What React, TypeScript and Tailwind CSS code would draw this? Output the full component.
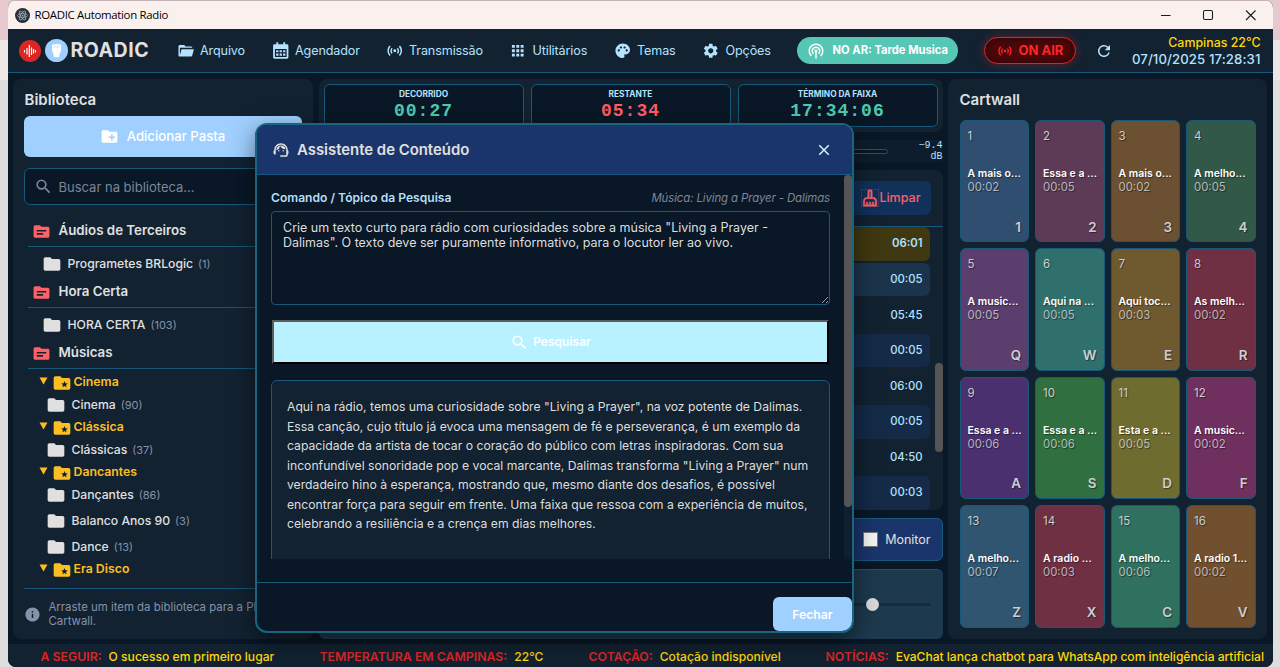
import type { ReactNode } from "react";
import type { IconType } from "react-icons";
import {
  MdApps,
  MdClose,
  MdCreateNewFolder,
  MdFolder,
  MdInfo,
  MdOutlineCleaningServices,
  MdPalette,
  MdPodcasts,
  MdRefresh,
  MdSearch,
  MdSensors,
  MdSettings,
  MdSource,
  MdSupportAgent,
} from "react-icons/md";

const FolderOpen = ({ className }: { className?: string }) => (
  <svg viewBox="0 0 24 24" fill="currentColor" className={className}>
    <path d="M19,20H4C2.89,20 2,19.1 2,18V6C2,4.89 2.89,4 4,4H10L12,6H19A2,2 0 0,1 21,8H4V18L6.14,10H23.21L20.93,18.5C20.7,19.37 19.92,20 19,20Z" />
  </svg>
);

const Calendar = ({ className }: { className?: string }) => (
  <svg viewBox="0 0 24 24" fill="currentColor" className={className}>
    <path
      fillRule="evenodd"
      d="M6 0.5H8.5V3H15.5V0.5H18V3H20.5A2 2 0 0 1 22.5 5V21A2 2 0 0 1 20.5 23H3.5A2 2 0 0 1 1.5 21V5A2 2 0 0 1 3.5 3H6ZM4 9.5V20.5H20V9.5Z"
    />
    <path d="M5.7 11.2H8.8V14.2H5.7ZM10.4 11.2H13.6V14.2H10.4ZM15.2 11.2H18.3V14.2H15.2ZM5.7 15.8H8.8V18.8H5.7ZM10.4 15.8H13.6V18.8H10.4ZM15.2 15.8H18.3V18.8H15.2Z" />
  </svg>
);

const FolderStar = ({ className }: { className?: string }) => (
  <svg viewBox="0 0 24 24" fill="currentColor" className={className}>
    <path d="M20,6H12L10,4H4A2,2 0 0,0 2,6V18A2,2 0 0,0 4,20H20A2,2 0 0,0 22,18V8A2,2 0 0,0 20,6Z" />
    <path d="M15 9.5L16.1 12.3L19 12.5L16.8 14.4L17.5 17.2L15 15.7L12.5 17.2L13.2 14.4L11 12.5L13.9 12.3Z" fill="#122231" />
  </svg>
);

const menu: { label: string; icon: IconType | typeof FolderOpen; width: string }[] = [
  { label: "Arquivo", icon: FolderOpen, width: "w-[95px]" },
  { label: "Agendador", icon: Calendar, width: "w-[114px]" },
  { label: "Transmissão", icon: MdSensors, width: "w-[123.5px]" },
  { label: "Utilitários", icon: MdApps, width: "w-[104.5px]" },
  { label: "Temas", icon: MdPalette, width: "w-[88.5px]" },
  { label: "Opções", icon: MdSettings, width: "w-[94.5px]" },
];

const timers = [
  { label: "DECORRIDO", value: "00:27", color: "text-[#4ec9b0]" },
  { label: "RESTANTE", value: "05:34", color: "text-[#ff5c62]" },
  { label: "TÉRMINO DA FAIXA", value: "17:34:06", color: "text-[#4ec9b0]" },
];

const playlist = [
  { time: "06:01", style: "bg-[#403810] font-semibold" },
  { time: "00:05", style: "bg-[#1b344c]" },
  { time: "05:45", style: "" },
  { time: "00:05", style: "bg-[#142a47]" },
  { time: "06:00", style: "" },
  { time: "00:05", style: "bg-[#142a47]" },
  { time: "04:50", style: "" },
  { time: "00:03", style: "bg-[#142a47]" },
];

const genres = [
  { name: "Cinema", folders: [{ name: "Cinema", count: 90 }] },
  { name: "Clássica", folders: [{ name: "Clássicas", count: 37 }] },
  {
    name: "Dancantes",
    folders: [
      { name: "Dançantes", count: 86 },
      { name: "Balanco Anos 90", count: 3 },
      { name: "Dance", count: 13 },
    ],
  },
  { name: "Era Disco", folders: [] },
];

const carts = [
  { title: "A mais o...", time: "00:02", hotkey: "1", bg: "bg-[#304e70]" },
  { title: "Essa e a ...", time: "00:05", hotkey: "2", bg: "bg-[#5d3b57]" },
  { title: "A mais o...", time: "00:02", hotkey: "3", bg: "bg-[#6b5032]" },
  { title: "A melho...", time: "00:05", hotkey: "4", bg: "bg-[#325848]" },
  { title: "A music...", time: "00:05", hotkey: "Q", bg: "bg-[#5c3e6e]" },
  { title: "Aqui na ...", time: "00:05", hotkey: "W", bg: "bg-[#2f706c]" },
  { title: "Aqui toc...", time: "00:03", hotkey: "E", bg: "bg-[#6f5a30]" },
  { title: "As melh...", time: "00:02", hotkey: "R", bg: "bg-[#703043]" },
  { title: "Essa e a ...", time: "00:06", hotkey: "A", bg: "bg-[#4b3070]" },
  { title: "Essa e a ...", time: "00:06", hotkey: "S", bg: "bg-[#306f40]" },
  { title: "Esta e a ...", time: "00:05", hotkey: "D", bg: "bg-[#6f6c30]" },
  { title: "A music...", time: "00:02", hotkey: "F", bg: "bg-[#70305f]" },
  { title: "A melho...", time: "00:07", hotkey: "Z", bg: "bg-[#305570]" },
  { title: "A radio ...", time: "00:03", hotkey: "X", bg: "bg-[#703044]" },
  { title: "A melho...", time: "00:06", hotkey: "C", bg: "bg-[#30705e]" },
  { title: "A radio 1...", time: "00:02", hotkey: "V", bg: "bg-[#70502f]" },
];

const TitleBar = () => (
  <div className="flex h-[29px] shrink-0 items-center border-t border-[#c4b2b6] bg-[#faf1ef] pl-[7px] text-black">
    <svg viewBox="0 0 16 16" className="size-[15px]">
      <circle cx="8" cy="8" r="8" fill="#2b2e3a" />
      <g fill="none" stroke="#9fb3bd" strokeWidth="0.8">
        <ellipse cx="8" cy="8" rx="5.4" ry="2.1" />
        <ellipse cx="8" cy="8" rx="5.4" ry="2.1" transform="rotate(60 8 8)" />
        <ellipse cx="8" cy="8" rx="5.4" ry="2.1" transform="rotate(120 8 8)" />
      </g>
      <circle cx="8" cy="8" r="0.9" fill="#9fb3bd" />
    </svg>
    <span className="ml-[5px] font-['Open_Sans',sans-serif] text-[11.4px] tracking-[-0.3px]">ROADIC Automation Radio</span>
    <svg viewBox="0 0 100 12" className="mr-[17px] ml-auto h-3 w-[100px]" fill="none" stroke="#1b1b1b" strokeWidth="1.1">
      <path d="M5 6.5H14.5" />
      <rect x="47.5" y="1.5" width="9" height="9" rx="1.5" />
      <path d="M90 1.5L99.5 11M99.5 1.5L90 11" />
    </svg>
  </div>
);

const Header = () => (
  <header className="flex h-11 shrink-0 items-center border-b border-[#17597a] bg-[#122231] pl-[11px]">
    <svg viewBox="0 0 22 22" className="size-[22px]">
      <circle cx="11" cy="11" r="11" fill="#dc2626" />
      <path d="M5.5 10V12.5M8 8V14.5M10.3 5V17M12.5 7.5V15M14.5 9V13.5M16.5 10V12.5" stroke="#fff" strokeWidth="1.2" />
    </svg>
    <svg viewBox="0 0 22 22" className="ml-1 size-[23px]">
      <circle cx="11" cy="11" r="11" fill="#9fcfff" />
      <path d="M6.8 5.2Q11 4.4 15.2 5.2L15.4 11Q14 13 13.4 17.4H8.6Q8 13 6.6 11Z" fill="#fff" />
      <path d="M8 6.6H14M8 7.9H14" stroke="#c5dcec" strokeWidth="0.6" />
    </svg>
    <span className="ml-[3px] w-[106px] pt-px text-[19.5px] leading-none font-bold tracking-[0.5px]">ROADIC</span>
    <nav className="flex text-[12.6px] tracking-[-0.12px] text-[#b4e2ff]">
      {menu.map((item) => (
        <div key={item.label} className={`flex items-center gap-[6px] ${item.width}`}>
          <item.icon className="size-[17.5px] shrink-0" />
          <span className="pt-0.5">{item.label}</span>
        </div>
      ))}
    </nav>
    <div className="flex h-[27px] w-[161px] shrink-0 items-center gap-2 rounded-full bg-[#56c6b5] pl-2.5 text-[11.2px] font-bold whitespace-nowrap text-white">
      <MdPodcasts className="size-[18px] shrink-0" />
      NO AR: Tarde Musica
    </div>
    <div className="ml-[26px] flex h-[27px] w-[92px] shrink-0 items-center gap-1.5 rounded-full border border-[#dc2626] bg-[#4d080b] pl-3 text-[13px] font-bold whitespace-nowrap text-[#ff2525] shadow-[0_0_10px_rgba(255,30,30,0.35),inset_0_0_8px_rgba(0,0,0,0.5)]">
      <MdSensors className="size-4 shrink-0" />
      ON AIR
    </div>
    <MdRefresh className="ml-[19px] size-[18px] shrink-0 text-[#b4e2ff]" />
    <div className="mr-[12px] ml-auto text-right font-medium whitespace-nowrap">
      <div className="text-[12.4px] leading-4 text-[#ffd60a]">Campinas 22°C</div>
      <div className="text-[13.2px] leading-4 tracking-[0.1px] text-[#b4e2ff]">07/10/2025 17:28:31</div>
    </div>
  </header>
);

const Category = ({ children }: { children: ReactNode }) => (
  <div className="flex h-[31px] items-center gap-2 border-b border-[#17597a] pl-1 text-[13.3px] font-semibold">
    <MdSource className="size-[19px] text-[#ff6168]" />
    {children}
  </div>
);

const Folder = ({ name, count, nested }: { name: string; count: number; nested?: boolean }) => (
  <div className={`flex h-[26px] items-center text-[12.2px] font-medium ${nested ? "pl-[18px]" : "pl-3.5"}`}>
    <MdFolder className="size-[20px] text-[#e0e0e0]" />
    <span className="ml-1.5">{name}</span>
    <span className="ml-[5px] text-[11px] font-normal text-[#8792a8]">({count})</span>
  </div>
);

const Library = () => (
  <aside className="flex w-[300px] flex-col rounded-lg bg-[#122231] px-[11px]">
    <h2 className="mt-[10px] pl-px text-[15px] leading-[22px] font-semibold">Biblioteca</h2>
    <button className="mt-[5px] flex h-[41px] shrink-0 items-center justify-center gap-2 rounded-md bg-[#a0d0ff] text-[13.2px] font-medium text-white">
      <MdCreateNewFolder className="size-[19px]" />
      Adicionar Pasta
    </button>
    <div className="mt-[11px] flex h-[37px] shrink-0 items-center gap-[6px] rounded-md border border-[#17597a] bg-[#091726] pl-[9px] text-[13px] text-[#7c8799]">
      <MdSearch className="size-[19px]" />
      <span className="pt-0.5">Buscar na biblioteca...</span>
    </div>
    <div className="mt-[11px] h-[372px] shrink-0 pl-1">
      <Category>Áudios de Terceiros</Category>
      <div className="pt-1">
        <Folder name="Programetes BRLogic" count={1} />
      </div>
      <Category>Hora Certa</Category>
      <div className="pt-1">
        <Folder name="HORA CERTA" count={103} />
      </div>
      <Category>Músicas</Category>
      <div className="pt-1">
        {genres.map((genre) => (
          <div key={genre.name}>
            <div className="flex h-[19px] items-center pl-[11px] text-[12.3px] font-semibold text-[#fbbf24]">
              <svg viewBox="0 0 9 8" className="-mt-1 h-2 w-[9px]" fill="currentColor">
                <path d="M0.5 0.5H8.5L4.5 7.5Z" />
              </svg>
              <FolderStar className="ml-1 size-[20px]" />
              <span className="ml-[2px] pb-px">{genre.name}</span>
            </div>
            {genre.folders.map((folder) => (
              <Folder key={folder.name} nested {...folder} />
            ))}
          </div>
        ))}
      </div>
    </div>
    <div className="flex flex-1 items-center gap-2 border-t border-[#17597a] text-[11.4px] leading-[14px] whitespace-nowrap text-[#8792a8]">
      <MdInfo className="size-[17px] shrink-0" />
      <span>
        Arraste um item da biblioteca para a Playlist ou
        <br />
        Cartwall.
      </span>
    </div>
  </aside>
);

const Player = () => (
  <main className="flex w-[624px] flex-col">
    <div className="flex h-[53px] gap-[7px] rounded-lg bg-[#122231] p-[5px]">
      {timers.map((timer) => (
        <div key={timer.label} className="flex flex-1 flex-col items-center rounded-md border border-[#17597a] bg-[#091726] pt-1">
          <span className="text-[8.3px] leading-[10px] font-bold text-[#b4e2ff]">{timer.label}</span>
          <span className={`mt-0.5 font-['Liberation_Mono',monospace] text-[18px] leading-5 font-bold tracking-[1px] ${timer.color}`}>
            {timer.value}
          </span>
        </div>
      ))}
    </div>
    <div className="mt-2 flex h-[22px] items-center justify-end bg-[#0e1d2c]">
      <div className="h-[5px] w-[500px] rounded-sm border border-[#17597a] bg-[#091726]" />
      <span className="ml-[25px] w-[30px] text-right font-['Liberation_Mono',monospace] text-[10px] leading-[11px] text-[#b4e2ff]">−9.4 dB</span>
    </div>
    <section className="mt-2 flex h-[340px] flex-col rounded-lg bg-[#122231]">
      <div className="flex h-[57px] shrink-0 items-center justify-end border-b border-[#17597a] pr-3">
        <button className="flex h-[34px] w-[90px] items-center justify-end rounded-md bg-[#11305a] pr-[10px] text-[12.5px] font-medium text-[#ff6168]">
          <MdOutlineCleaningServices className="size-[18px] stroke-current stroke-[0.5px]" />
          Limpar
        </button>
      </div>
      <div className="flex min-h-0 flex-1 overflow-hidden">
        <div className="flex flex-1 flex-col gap-[2px] pl-3">
          {playlist.map((row, i) => (
            <div key={i} className={`flex h-[33.6px] shrink-0 items-center justify-end rounded-md pr-[7px] text-[11.3px] font-medium text-[#b4e2ff] ${row.style}`}>
              {row.time}
            </div>
          ))}
        </div>
        <div className="ml-[5px] w-2 pt-[136px]">
          <div className="h-[89px] rounded-full bg-[#555]" />
        </div>
      </div>
    </section>
    <div className="mt-2 flex h-[43px] items-center justify-end gap-[7px] rounded-md border border-[#17597a] bg-[#1a356c] pr-[11px] text-[12.5px]">
      <span className="size-[15px] border border-[#767676] bg-[#f4f4f4]" />
      <span className="pt-px">Monitor</span>
    </div>
    <div className="mt-2 flex h-[70px] items-center justify-end rounded-md border-t border-[#17597a] bg-[#1d394d] pr-3">
      <div className="h-[3px] w-14 bg-[#142d38]" />
      <span className="-ml-1 size-[13px] rounded-full bg-[#d9d9d9]" />
      <div className="h-[3px] w-[52px] rounded-full bg-[#142d38]" />
    </div>
  </main>
);

const Cartwall = () => (
  <aside className="-ml-px w-[319px] rounded-lg bg-[#122231] px-3 pt-[10px]">
    <h2 className="text-[15px] leading-[22px] font-semibold">Cartwall</h2>
    <div className="mt-[9px] mr-[-1px] grid h-[507.5px] grid-cols-4 grid-rows-4 gap-1.5">
      {carts.map((cart, i) => (
        <div
          key={i}
          className={`flex min-w-0 flex-col rounded-md border border-[#17597a] px-[7px] pt-[7px] [text-shadow:1px_1px_1px_rgba(0,0,0,0.45)] ${cart.bg}`}
        >
          <span className="text-[11.5px] leading-4 text-[#ccced2]">{i + 1}</span>
          <span className="mt-[22px] text-[10.5px] leading-[15px] font-semibold whitespace-nowrap text-white">{cart.title}</span>
          <span className="text-[11.4px] leading-[13px] text-[#ccced2]/85">{cart.time}</span>
          <span className="mt-[22.5px] self-end text-[13.4px] leading-5 font-semibold text-[#ccced2]">{cart.hotkey}</span>
        </div>
      ))}
    </div>
  </aside>
);

const Ticker = () => (
  <footer className="flex h-[23px] shrink-0 items-center bg-[#122231] pt-[3px] pl-[33px] text-[12.1px] font-medium whitespace-nowrap text-[#ffd60a]">
    <div className="w-[279px]">
      <span className="mr-[7px] text-[12.3px] font-semibold text-[#dc2626]">A SEGUIR:</span>O sucesso em primeiro lugar
    </div>
    <div className="w-[269px]">
      <span className="mr-[7px] text-[12.3px] font-semibold text-[#dc2626]">TEMPERATURA EM CAMPINAS:</span>22°C
    </div>
    <div className="w-[237px]">
      <span className="mr-[7px] text-[12.3px] font-semibold text-[#dc2626]">COTAÇÃO:</span>Cotação indisponível
    </div>
    <div>
      <span className="mr-[7px] text-[12.3px] font-semibold text-[#dc2626]">NOTÍCIAS:</span>
      <span className="tracking-[-0.03px]">EvaChat lança chatbot para WhatsApp com inteligência artificial</span>
    </div>
  </footer>
);

const AssistantModal = () => (
  <div className="absolute top-[123px] left-[255px] flex h-[510px] w-[599px] flex-col overflow-hidden rounded-xl border-2 border-[#1a6480] bg-[#091726] shadow-[0_8px_24px_rgba(0,0,0,0.5)]">
    <div className="flex h-[50px] shrink-0 items-center border-b border-[#17597a] bg-[#1a356c] pr-[19px] pl-[15px]">
      <MdSupportAgent className="size-[18px]" />
      <h3 className="ml-[7px] pt-px text-[14.9px] font-semibold">Assistente de Conteúdo</h3>
      <MdClose className="ml-auto size-[18px] text-[#d8f1ff]" />
    </div>
    <div className="flex h-[384px] shrink-0 overflow-hidden">
      <div className="flex flex-1 flex-col pr-[14px] pl-[14px]">
        <div className="mt-[14px] flex h-5 items-center justify-between">
          <span className="text-[12.1px] font-semibold text-[#b4dff8]">Comando / Tópico da Pesquisa</span>
          <span className="text-[11.4px] tracking-[-0.1px] text-[#7c8799] italic">Música: Living a Prayer - Dalimas</span>
        </div>
        <textarea
          className="mt-1 h-[94px] w-[559px] shrink-0 rounded border border-[#17597a] bg-[#091726] px-[11px] pt-2 text-[12.5px] leading-[15px] text-[#dedede]"
          defaultValue={'Crie um texto curto para rádio com curiosidades sobre a música "Living a Prayer - Dalimas". O texto deve ser puramente informativo, para o locutor ler ao vivo.'}
        />
        <button className="mt-[15px] ml-px flex h-11 w-[557px] shrink-0 items-center justify-center gap-1 border-2 border-t-[#5c5c5c] border-r-black border-b-black border-l-[#5c5c5c] bg-[#b8f1ff] text-[12px] font-semibold text-white">
          <MdSearch className="size-[19px]" />
          Pesquisar
        </button>
        <div className="mt-4 h-[220px] w-[559px] shrink-0 rounded-md border border-[#17597a] bg-[#122231] pt-4 pl-[15px] text-[12.2px] leading-[19.5px] text-[#dedede]">
          <p className="w-[528px]">
            Aqui na rádio, temos uma curiosidade sobre "Living a Prayer", na voz potente de Dalimas. Essa canção, cujo título já evoca uma mensagem de fé e perseverança, é um exemplo da capacidade da artista de tocar o coração do público com letras inspiradoras. Com sua inconfundível sonoridade pop e vocal marcante, Dalimas transforma "Living a Prayer" num verdadeiro hino à esperança, mostrando que, mesmo diante dos desafios, é possível encontrar força para seguir em frente. Uma faixa que ressoa com a experiência de muitos, celebrando a resiliência e a crença em dias melhores.
          </p>
        </div>
      </div>
      <div className="w-2 bg-[#101f2e]">
        <div className="h-[332px] rounded-full bg-[#555]" />
      </div>
    </div>
    <div className="mt-[23px] flex flex-1 items-end justify-end border-t border-[#17597a]">
      <button className="h-[34px] w-[79px] rounded-md bg-[#a0d0ff] pt-0.5 text-[12.2px] font-semibold text-white">Fechar</button>
    </div>
  </div>
);

const App = () => {
  return (
    <div className="relative flex h-[667px] w-[1280px] overflow-hidden bg-[linear-gradient(#e6c9ce_0_40px,#ece6e4_40px_80px,#dedede_80px)] font-['Inter',sans-serif] text-[#e0e0e0]">
      <div className="mx-auto flex h-[667px] w-[1265px] flex-col overflow-hidden rounded-lg bg-[#091726]">
        <TitleBar />
        <Header />
        <div className="mt-1.5 flex h-[560px] shrink-0 gap-[6px] pl-[5px]">
          <Library />
          <Player />
          <Cartwall />
        </div>
        <div className="h-[5px] shrink-0" />
        <Ticker />
      </div>
      <AssistantModal />
    </div>
  );
};

export default App;
